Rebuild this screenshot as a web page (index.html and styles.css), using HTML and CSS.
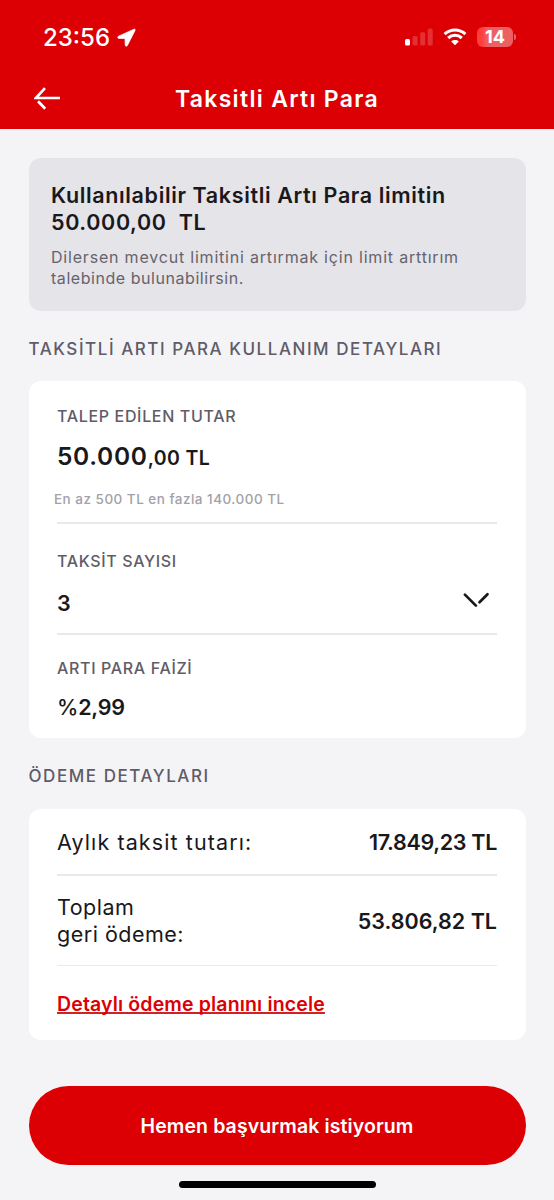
FILE: index.html
```html
<!DOCTYPE html>
<html lang="tr">
<head>
<meta charset="utf-8">
<title>Taksitli Artı Para</title>
<link rel="stylesheet" href="styles.css">
</head>
<body>
<header class="top">
  <div class="status">
    <div class="clock"><span class="time">23:56</span>
      <svg class="location" width="19" height="19" viewBox="0 0 19 19"><path d="M17 1.2 1.5 8.2c-1.2.6-.9 2.2.3 2.2l6.2.2.2 6.4c0 1.4 1.7 1.7 2.2.5L18 2.6c.5-1-.1-1.8-1-1.4z" fill="#fff" stroke="#fff" stroke-width=".7"/></svg>
    </div>
    <div class="indicators">
      <svg width="28" height="18" viewBox="0 0 28 18"><rect x="0" y="11" width="5" height="6.5" rx="1.5" fill="#fff"/><g fill="#ed6064" opacity=".5"><rect x="7.6" y="8" width="5" height="9.5" rx="1.5"/><rect x="15.2" y="4.3" width="5" height="13.2" rx="1.5"/><rect x="22.7" y=".5" width="5" height="17" rx="1.5"/></g></svg>
      <svg class="wifi" width="24" height="18" viewBox="0 0 24 18"><path d="M1.6 6.1C7.5.6 16.5.6 22.4 6.1M5.2 10c3.9-3.6 9.7-3.6 13.6 0" fill="none" stroke="#fff" stroke-width="3.1"/><path d="M8.2 13.5c2.2-1.9 5.4-1.9 7.6 0L12 17.3z" fill="#fff"/></svg>
      <div class="battery"><span class="level">14</span></div><i class="tip"></i>
    </div>
  </div>
  <div class="nav">
    <svg class="back" width="27" height="24" viewBox="0 0 27 24"><path d="M11 1.2 1.8 11H26M4 14.2l7.2 7.6" fill="none" stroke="#fff" stroke-width="2.7"/></svg>
    <h1 class="title">Taksitli Artı Para</h1>
  </div>
</header>
<main class="content">
  <section class="notice">
    <h2 class="notice-title">Kullanılabilir Taksitli Artı Para limitin<br>50.000,00 &nbsp;TL</h2>
    <p class="notice-text">Dilersen mevcut limitini artırmak için limit arttırım<br><span class="notice-end">talebinde bulunabilirsin.</span></p>
  </section>
  <h3 class="heading">TAKSİTLİ ARTI PARA KULLANIM DETAYLARI</h3>
  <section class="card usage">
    <div class="field amount-field">
      <div class="label">TALEP EDİLEN TUTAR</div>
      <div class="amount">50.000<span class="cents">,00 TL</span></div>
      <div class="hint">En az 500 TL en fazla 140.000 TL</div>
    </div>
    <div class="field count-field">
      <div class="label">TAKSİT SAYISI</div>
      <div class="select"><span class="value">3</span>
        <svg class="chevron" width="28" height="18" viewBox="0 0 28 18"><path d="m2.9 3.6 11 11M17.5 11.3l8-8" fill="none" stroke="#18171b" stroke-width="2.7" stroke-linecap="round"/></svg>
      </div>
    </div>
    <div class="field rate-field">
      <div class="label">ARTI PARA FAİZİ</div>
      <div class="value rate"><span class="percent">%</span>2,99</div>
    </div>
  </section>
  <h3 class="heading heading-pay">ÖDEME DETAYLARI</h3>
  <section class="card payment">
    <div class="row monthly"><span class="name name-monthly">Aylık taksit tutarı:</span><span class="sum sum-monthly">17.849,23 TL</span></div>
    <div class="row total"><span class="name">Toplam<br>geri ödeme:</span><span class="sum">53.806,82 TL</span></div>
    <a class="plan" href="#">Detaylı ödeme planını incele</a>
  </section>
  <button class="apply">Hemen başvurmak istiyorum</button>
</main>
<div class="home"></div>
</body>
</html>
```

FILE: styles.css
```css
* { box-sizing: border-box; }
body { margin: 0; height: 1200px; overflow: hidden; background: #f4f4f7; color: #19181b; font-family: Inter, "Open Sans", sans-serif; display: flex; flex-direction: column; }
h1, h2, h3, p { margin: 0; font-weight: 500; }
svg { display: block; flex: none; }
.top { height: 129px; background: #dc0004; color: #fff; flex: none; }
.status { height: 74px; padding: 0 38px 0 43px; display: flex; justify-content: space-between; align-items: center; }
.clock { display: flex; align-items: center; gap: 6.5px; }
.time { font-size: 24px; font-weight: 500; }
.indicators { display: flex; align-items: center; }
.wifi { margin-left: 10px; }
.battery { width: 36px; height: 20px; margin-left: 10px; border-radius: 6px; background: linear-gradient(90deg, #ff3f3d 0 14%, #ec6064 28%); display: flex; align-items: center; justify-content: center; }
.level { font-size: 18px; font-weight: 700; line-height: 20px; }
.tip { width: 2px; height: 6px; margin-left: 1px; border-radius: 0 2px 2px 0; background: #ec6064; }
.nav { height: 49px; display: grid; grid-template-columns: 70px 1fr 70px; align-items: center; }
.back { margin-left: 34px; }
.title { font-size: 23px; line-height: 30px; font-weight: 600; text-align: center; letter-spacing: 1.3px; }
.content { padding: 29px 28.5px 0; flex: none; height: 1036px; display: flex; flex-direction: column; }
.notice { height: 153px; padding: 24px 22.5px 0; border-radius: 12px; background: #e5e4e9; flex: none; }
.notice-title { font-size: 21.5px; line-height: 27px; font-weight: 600; white-space: nowrap; letter-spacing: .63px; }
.notice-text { margin-top: 11px; font-size: 16px; line-height: 20.5px; font-weight: 400; letter-spacing: .8px; color: #66636d; white-space: nowrap; }
.notice-end { letter-spacing: .55px; }
.heading { margin-top: 27px; font-size: 17px; line-height: 22px; letter-spacing: 1.55px; color: #5f5b67; white-space: nowrap; }
.card { background: #fff; border-radius: 12px; padding: 0 28.5px; flex: none; }
.usage { height: 357px; margin-top: 21px; }
.label { font-size: 16px; line-height: 20px; font-weight: 500; letter-spacing: .66px; color: #605c67; }
.amount-field { height: 143px; padding-top: 25px; border-bottom: 2px solid #e9e9ea; }
.amount { margin-top: 14px; font-size: 24.5px; line-height: 32px; font-weight: 600; letter-spacing: .7px; }
.cents { font-size: 19.5px; font-weight: 600; letter-spacing: .35px; }
.hint { margin: 16px 0 0 -3px; font-size: 13.5px; line-height: 18px; font-weight: 500; letter-spacing: .48px; color: #a3a1a8; }
.count-field { height: 111px; padding-top: 27px; border-bottom: 2px solid #e9e9ea; }
.select { margin-top: 18px; padding-right: 7px; height: 26px; display: flex; justify-content: space-between; }
.chevron { margin-top: 2px; }
.value { font-size: 21.5px; line-height: 28px; font-weight: 600; letter-spacing: -.2px; }
.percent { font-weight: 500; }
.rate-field { padding-top: 23px; }
.rate { margin-top: 15px; }
.heading-pay { margin-top: 27px; }
.payment { height: 231px; margin-top: 22px; }
.row { display: flex; justify-content: space-between; align-items: center; border-bottom: 2px solid #e9e9ea; }
.monthly { height: 67px; padding-top: 2px; }
.total { height: 90px; padding-top: 1px; border-bottom-width: 1px; }
.name { font-size: 21.5px; line-height: 27px; font-weight: 400; letter-spacing: .5px; }
.name-monthly { letter-spacing: 1.1px; }
.sum { font-size: 21.5px; line-height: 27px; font-weight: 600; }
.sum-monthly { letter-spacing: -.33px; }
.plan { display: block; width: max-content; margin-top: 25px; font-size: 19.5px; line-height: 26px; font-weight: 600; letter-spacing: .15px; color: #dc0004; text-decoration-color: #cc2328; text-decoration-thickness: 2px; text-underline-offset: 1px; text-decoration-skip-ink: none; }
.apply { flex: none; height: 79px; margin-top: 46px; padding: 0; border: 0; border-radius: 40px; background: #dc0004; color: #fff; font: 600 19.5px Inter, "Open Sans", sans-serif; letter-spacing: .1px; }
.home { flex: none; width: 197px; height: 7px; margin: 16px auto 0; border-radius: 4px; background: #000; }
```
